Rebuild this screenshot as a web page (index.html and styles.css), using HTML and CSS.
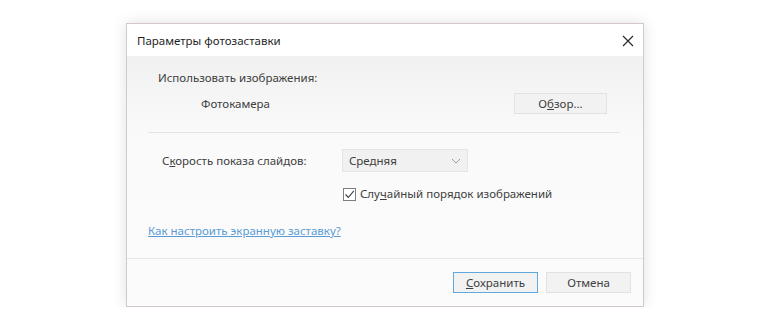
FILE: index.html
```html
<!DOCTYPE html>
<html>
    <head>
        <meta charset="utf-8">
        <link rel="stylesheet" href="styles.css">
    </head>
    <body>
        <div class="dialog">
            <div class="titlebar">
                <span class="title">Параметры фотозаставки</span>
                <svg class="close" width="12" height="12" viewBox="0 0 12 12">
                    <path d="M1 1 L11 11 M11 1 L1 11" stroke="#2a2a2a" stroke-width="1.2" fill="none"/>
                </svg>
            </div>
            <div class="content">
                <div class="heading">Использовать изображения:</div>
                <div class="source-row">
                    <span class="source">Фотокамера</span>
                    <button class="btn browse">О<u>б</u>зор...</button>
                </div>
                <hr class="sep">
                <div class="speed-row">
                    <span class="speed-label">С<u>к</u>орость показа слайдов:</span>
                    <div class="select">
                        <span>Средняя</span>
                        <svg width="10" height="6" viewBox="0 0 10 6">
                            <path d="M1 1 L5 5 L9 1" stroke="#9a9a9a" stroke-width="1" fill="none"/>
                        </svg>
                    </div>
                </div>
                <div class="check-row">
                    <span class="checkbox">
                        <svg width="11" height="11" viewBox="0 0 11 11">
                            <path d="M1.5 5.5 L4.3 8.5 L9.8 1.8" stroke="#3a3a3a" stroke-width="1.1" fill="none"/>
                        </svg>
                    </span>
                    <span>Слу<u>ч</u>айный порядок изображений</span>
                </div>
                <a class="help" href="#">Как настроить экранную заставку?</a>
            </div>
            <div class="footer">
                <button class="btn primary"><u>С</u>охранить</button>
                <button class="btn">Отмена</button>
            </div>
        </div>
    </body>
</html>
```
FILE: styles.css
```css
body {
    margin: 0;
    background: #ffffff;
    font-family: "Noto Sans", "Open Sans", sans-serif;
    font-size: 11.5px;
    color: #404040;
}

.dialog {
    width: 516px;
    margin: 23px 0 0 126px;
    border: 1px solid #d4c9c9;
    box-shadow: 0 0 14px rgba(0, 0, 0, 0.12);
    background: #ffffff;
}

.titlebar {
    height: 32px;
    display: flex;
    align-items: center;
    justify-content: space-between;
    padding: 0 9px 0 10px;
    background: #ffffff;
}

.title {
    color: #1f1f1f;
}

.close {
    margin-top: 1px;
}

.content {
    height: 202px;
    padding: 0 23px 0 21px;
    background: linear-gradient(to bottom, #f1f1f1, #fafafa 40%, #fbfbfb);
    display: flex;
    flex-direction: column;
}

.heading {
    margin-top: 14px;
    padding-left: 10px;
    line-height: 16px;
}

.source-row {
    margin-top: 7px;
    display: flex;
    align-items: center;
    justify-content: space-between;
}

.source {
    padding-left: 53px;
}

.btn {
    height: 21px;
    width: 85px;
    padding: 0;
    font-family: inherit;
    font-size: 11.5px;
    color: #404040;
    background: #f2f2f2;
    border: 1px solid #e2e2e2;
}

.browse {
    width: 93px;
    margin-right: 13px;
}

.sep {
    width: 100%;
    margin: 18px 0 0;
    border: 0;
    border-top: 1px solid #e3e3e3;
}

.speed-row {
    margin-top: 16px;
    display: flex;
    align-items: center;
}

.speed-label {
    width: 180px;
    padding-left: 14px;
}

.select {
    width: 112px;
    height: 21px;
    padding: 0 6px 0 6px;
    display: flex;
    align-items: center;
    justify-content: space-between;
    background: #f1f1f1;
    border: 1px solid #e4e4e4;
}

.check-row {
    margin-top: 14px;
    padding-left: 195px;
    display: flex;
    align-items: center;
    gap: 4px;
    line-height: 16px;
}

.checkbox {
    width: 11px;
    height: 11px;
    border: 1px solid #7d7d7d;
    background: #ffffff;
    display: flex;
}

.help {
    margin-top: 21px;
    line-height: 16px;
    align-self: flex-start;
    color: #5a9bd6;
}

.footer {
    height: 48px;
    border-top: 1px solid #e6e6e6;
    background: #fbfbfb;
    display: flex;
    justify-content: flex-end;
    align-items: flex-start;
    gap: 8px;
    padding: 13px 12px 0 0;
    box-sizing: border-box;
}

.primary {
    border-color: #5fa8e0;
}
```
